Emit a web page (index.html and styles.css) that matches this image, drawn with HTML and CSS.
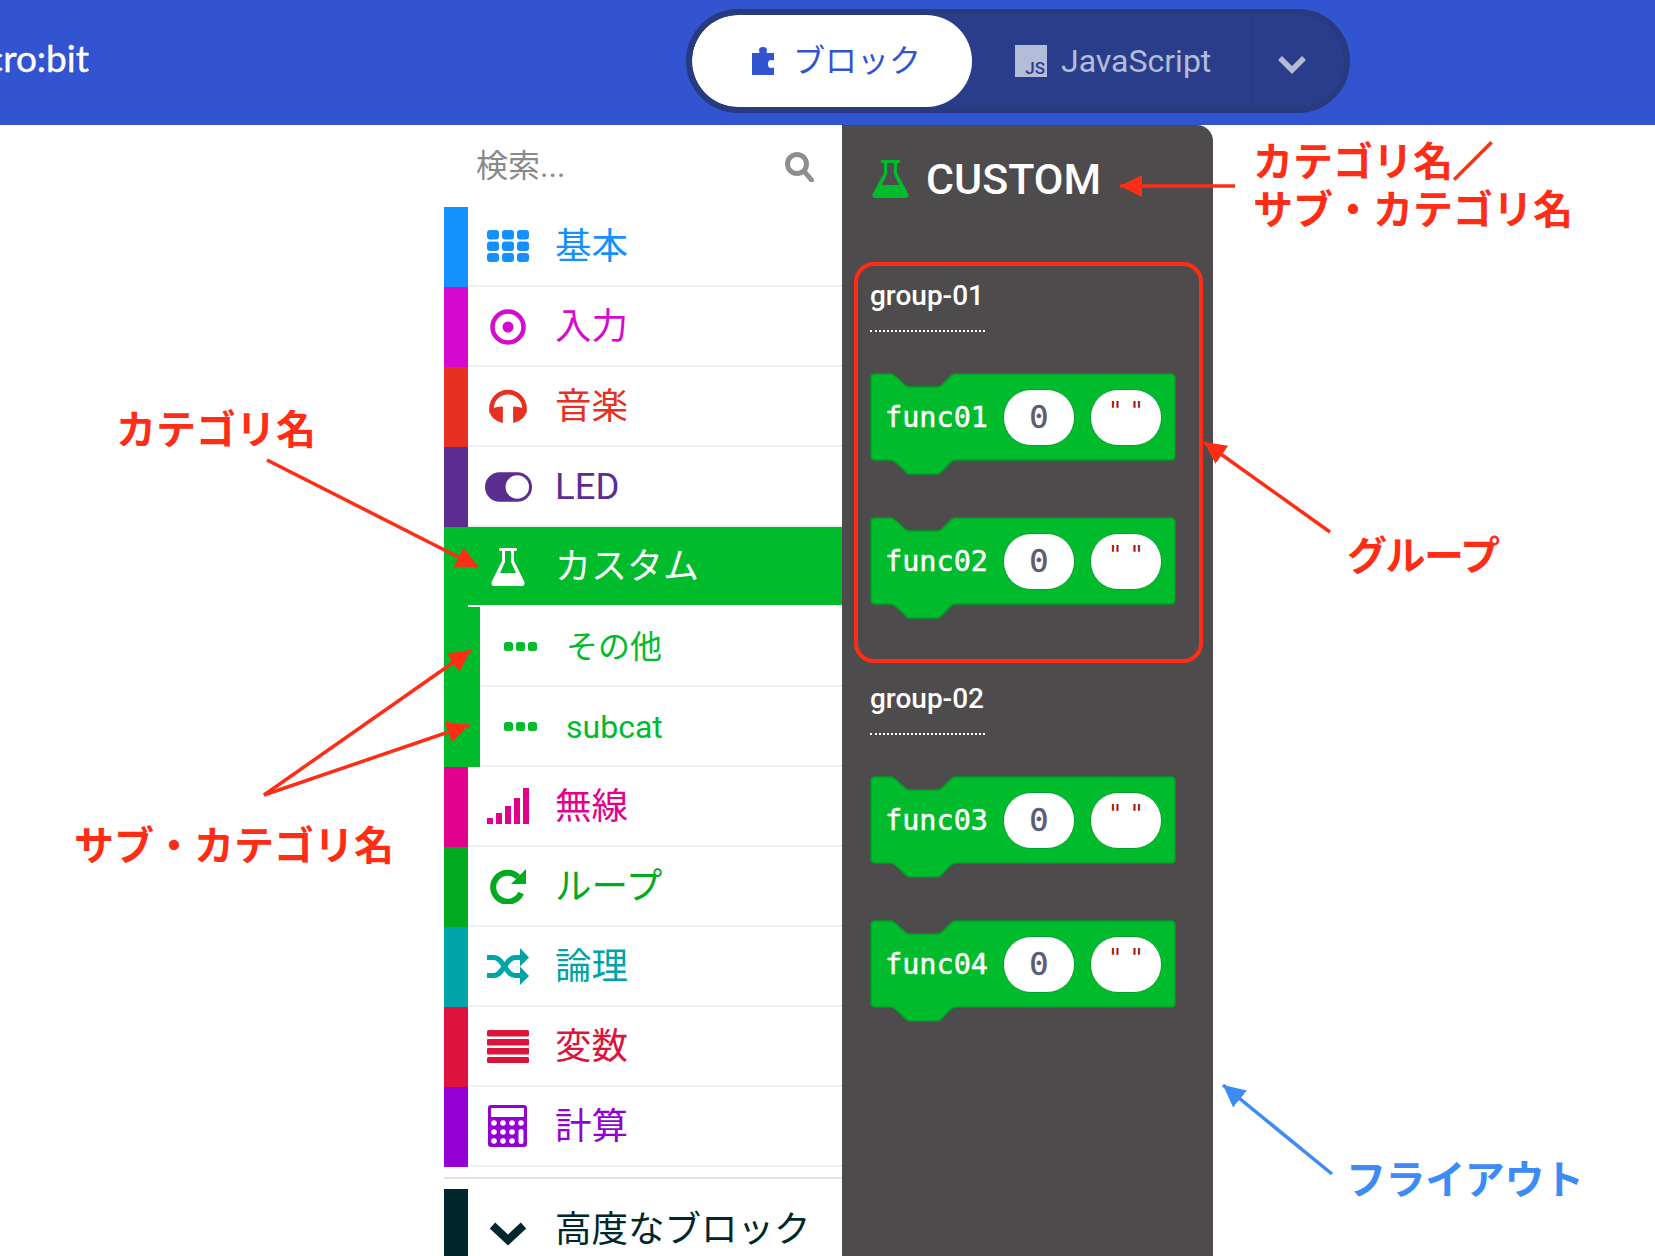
FILE: index.html
```html
<!DOCTYPE html>
<html lang="ja">
<head>
  <meta charset="UTF-8">
  <title>micro:bit ブロック カテゴリ</title>
  <link rel="stylesheet" href="styles.css">
</head>
<body>
  <!-- Header -->
  <div class="header">
    <div class="brand"><span>micro:bit</span></div>
    <div class="toggle">
      <div class="tab tab-active">
        <svg class="icon-puzzle" viewBox="0 0 24 28"><path d="M1 6h7c1-1 0-2 0-3a4 3 0 0 1 8 0c0 1-1 2 0 3h7v7c-1 1-2 0-3 0a3 4 0 0 0 0 8c1 0 2-1 3 0v7H1z"/></svg>
        <span class="ja">ブロック</span>
      </div>
      <div class="tab">
        <div class="icon-js"><span>JS</span></div>
        <span>JavaScript</span>
      </div>
      <div class="tab-more">
        <svg class="icon-more" viewBox="0 0 30 20"><path d="M3 4l12 12L27 4"/></svg>
      </div>
    </div>
  </div>

  <div class="workspace">
    <!-- Toolbox -->
    <div class="toolbox">
      <div class="search">
        <span class="ja">検索...</span>
        <svg class="icon-search" viewBox="0 0 29 30"><circle cx="12" cy="12" r="9.5"/><path d="M19 19l7.500 9"/></svg>
      </div>

      <div class="cat c-basic">
        <div class="cat-strip"></div>
        <div class="cat-body">
          <div class="cat-icon">
            <svg width="42" height="32" viewBox="0 0 42 32">
              <rect x="0" y="0" width="12" height="9.500" rx="3"/><rect x="15" y="0" width="12" height="9.500" rx="3"/><rect x="30" y="0" width="12" height="9.500" rx="3"/>
              <rect x="0" y="11.500" width="12" height="9.500" rx="3"/><rect x="15" y="11.500" width="12" height="9.500" rx="3"/><rect x="30" y="11.500" width="12" height="9.500" rx="3"/>
              <rect x="0" y="23" width="12" height="9" rx="3"/><rect x="15" y="23" width="12" height="9" rx="3"/><rect x="30" y="23" width="12" height="9" rx="3"/>
            </svg>
          </div>
          <span class="ja">基本</span>
        </div>
      </div>

      <div class="cat c-input">
        <div class="cat-strip"></div>
        <div class="cat-body">
          <div class="cat-icon">
            <svg class="nudge" width="36" height="36" viewBox="0 0 36 36"><circle class="ring" cx="18" cy="18" r="15.500" stroke-width="4.500"/><circle cx="18" cy="18" r="5.500"/></svg>
          </div>
          <span class="ja">入力</span>
        </div>
      </div>

      <div class="cat c-music">
        <div class="cat-strip"></div>
        <div class="cat-body">
          <div class="cat-icon">
            <svg width="40" height="34" viewBox="0 0 38 33">
              <path class="ring" stroke-width="4.500" d="M3 23V19a16 16 0 0 1 32 0v4"/>
              <path d="M1 21q1 9 13 12V17Q6 17 1 21z"/><path d="M37 21q-1 9-13 12V17q8 0 13 4z"/>
            </svg>
          </div>
          <span class="ja">音楽</span>
        </div>
      </div>

      <div class="cat c-led">
        <div class="cat-strip"></div>
        <div class="cat-body">
          <div class="cat-icon">
            <svg class="nudge" width="47" height="30" viewBox="0 0 48 30"><rect width="48" height="30" rx="15"/><circle cx="33" cy="15" r="12" fill="#fff"/></svg>
          </div>
          <span class="latin">LED</span>
        </div>
      </div>

      <div class="cat c-custom cat-selected">
        <div class="cat-strip"></div>
        <div class="cat-body">
          <div class="cat-icon">
            <svg class="nudge" width="34" height="38" viewBox="0 0 34 38"><path fill-rule="evenodd" d="M9 0H25q1 0 1 1.500T25 3H23V13L33 33q2 5-3 5H4q-5 0-3-5L11 13V3H9Q8 3 8 1.500T9 0zM14 3V14L9 25H25L20 14V3z"/></svg>
          </div>
          <span class="ja">カスタム</span>
        </div>
      </div>

      <div class="cat cat-sub c-custom">
        <div class="cat-strip"></div>
        <div class="cat-body">
          <div class="cat-icon">
            <svg width="33" height="9" viewBox="0 0 33 9"><rect width="9" height="9" rx="2.500"/><rect x="12" width="9" height="9" rx="2.500"/><rect x="24" width="9" height="9" rx="2.500"/></svg>
          </div>
          <span class="ja">その他</span>
        </div>
      </div>

      <div class="cat cat-sub c-custom">
        <div class="cat-strip"></div>
        <div class="cat-body">
          <div class="cat-icon">
            <svg width="33" height="9" viewBox="0 0 33 9"><rect width="9" height="9" rx="2.500"/><rect x="12" width="9" height="9" rx="2.500"/><rect x="24" width="9" height="9" rx="2.500"/></svg>
          </div>
          <span class="latin">subcat</span>
        </div>
      </div>

      <div class="cat c-radio">
        <div class="cat-strip"></div>
        <div class="cat-body">
          <div class="cat-icon">
            <svg width="42" height="36" viewBox="0 0 42 36"><rect x="0" y="30" width="6" height="6"/><rect x="9" y="25" width="6" height="11"/><rect x="18" y="18" width="6" height="18"/><rect x="27" y="10" width="6" height="26"/><rect x="36" y="0" width="6" height="36"/></svg>
          </div>
          <span class="ja">無線</span>
        </div>
      </div>

      <div class="cat c-loops">
        <div class="cat-strip"></div>
        <div class="cat-body">
          <div class="cat-icon">
            <svg width="36" height="36" viewBox="0 0 36 36"><path class="ring" stroke-width="6" d="M28 9A14.500 14.500 0 1 0 31 25"/><path d="M36 1V16H21z"/></svg>
          </div>
          <span class="ja">ループ</span>
        </div>
      </div>

      <div class="cat c-logic">
        <div class="cat-strip"></div>
        <div class="cat-body">
          <div class="cat-icon">
            <svg width="42" height="37" viewBox="0 0 42 37">
              <path class="ring" stroke-width="5" d="M0 9.500H7C16 9.500 19 27.500 28 27.500H34"/>
              <path class="ring" stroke-width="5" d="M0 27.500H7C16 27.500 19 9.500 28 9.500H34"/>
              <path d="M33 0L42 9.500 33 18.500z"/><path d="M33 18.500L42 28 33 37z"/>
            </svg>
          </div>
          <span class="ja">論理</span>
        </div>
      </div>

      <div class="cat c-vars">
        <div class="cat-strip"></div>
        <div class="cat-body">
          <div class="cat-icon">
            <svg width="42" height="33" viewBox="0 0 42 33"><rect width="42" height="6.500" rx="1.500"/><rect y="9" width="42" height="6.500" rx="1"/><rect y="18" width="42" height="6.500" rx="1"/><rect y="27" width="42" height="6" rx="1.500"/></svg>
          </div>
          <span class="ja">変数</span>
        </div>
      </div>

      <div class="cat c-math">
        <div class="cat-strip"></div>
        <div class="cat-body">
          <div class="cat-icon">
            <svg class="shift-left" width="39" height="42" viewBox="0 0 39 42">
              <rect width="39" height="42" rx="3"/>
              <g fill="#fff">
                <rect x="3" y="3" width="33" height="9" rx="1"/>
                <circle cx="6" cy="18" r="2.800"/><circle cx="15" cy="18" r="2.800"/><circle cx="24" cy="18" r="2.800"/><circle cx="33" cy="18" r="2.800"/>
                <circle cx="6" cy="27" r="2.800"/><circle cx="15" cy="27" r="2.800"/><circle cx="24" cy="27" r="2.800"/>
                <circle cx="6" cy="36" r="2.800"/><circle cx="15" cy="36" r="2.800"/><circle cx="24" cy="36" r="2.800"/>
                <rect x="30.500" y="24" width="5" height="15" rx="2.500"/>
              </g>
            </svg>
          </div>
          <span class="ja">計算</span>
        </div>
      </div>

      <div class="toolbox-sep"></div>

      <div class="cat cat-more c-advanced">
        <div class="cat-strip"></div>
        <div class="cat-body">
          <div class="cat-icon">
            <svg width="38" height="25" viewBox="0 0 38 25"><path class="ring" stroke-width="8" d="M3.500 4.500L19 19 34.500 4.500"/></svg>
          </div>
          <span class="ja">高度なブロック</span>
        </div>
      </div>
    </div>

    <!-- Flyout -->
    <div class="flyout">
      <div class="flyout-head">
        <svg class="icon-flask" width="37" height="38" viewBox="0 0 34 38" preserveAspectRatio="none"><path fill-rule="evenodd" d="M9 0H25q1 0 1 1.500T25 3H23V13L33 33q2 5-3 5H4q-5 0-3-5L11 13V3H9Q8 3 8 1.500T9 0zM14 3V14L9 25H25L20 14V3z"/></svg>
        <span>CUSTOM</span>
      </div>

      <div class="group group-marked">
        <div class="group-label">group-01</div>
        <div class="block">
          <svg class="block-shape" viewBox="0 0 306 102"><path d="M1 5Q1 1 5 1H20Q23 1 25 3L35 12Q37 14 40 14H67Q70 14 72 12L81 3Q83 1 86 1H301Q305 1 305 5V83Q305 87 301 87H86Q83 87 81 89L72 98Q70 101 67 101H40Q37 101 35 98L25 89Q23 87 20 87H5Q1 87 1 83z"/></svg>
          <div class="block-row">
            <span class="block-name">func01</span>
            <span class="pill pill-num">0</span>
            <span class="pill pill-str"><i>"</i><i>"</i></span>
          </div>
        </div>
        <div class="block">
          <svg class="block-shape" viewBox="0 0 306 102"><path d="M1 5Q1 1 5 1H20Q23 1 25 3L35 12Q37 14 40 14H67Q70 14 72 12L81 3Q83 1 86 1H301Q305 1 305 5V83Q305 87 301 87H86Q83 87 81 89L72 98Q70 101 67 101H40Q37 101 35 98L25 89Q23 87 20 87H5Q1 87 1 83z"/></svg>
          <div class="block-row">
            <span class="block-name">func02</span>
            <span class="pill pill-num">0</span>
            <span class="pill pill-str"><i>"</i><i>"</i></span>
          </div>
        </div>
      </div>

      <div class="group">
        <div class="group-label">group-02</div>
        <div class="block">
          <svg class="block-shape" viewBox="0 0 306 102"><path d="M1 5Q1 1 5 1H20Q23 1 25 3L35 12Q37 14 40 14H67Q70 14 72 12L81 3Q83 1 86 1H301Q305 1 305 5V83Q305 87 301 87H86Q83 87 81 89L72 98Q70 101 67 101H40Q37 101 35 98L25 89Q23 87 20 87H5Q1 87 1 83z"/></svg>
          <div class="block-row">
            <span class="block-name">func03</span>
            <span class="pill pill-num">0</span>
            <span class="pill pill-str"><i>"</i><i>"</i></span>
          </div>
        </div>
        <div class="block">
          <svg class="block-shape" viewBox="0 0 306 102"><path d="M1 5Q1 1 5 1H20Q23 1 25 3L35 12Q37 14 40 14H67Q70 14 72 12L81 3Q83 1 86 1H301Q305 1 305 5V83Q305 87 301 87H86Q83 87 81 89L72 98Q70 101 67 101H40Q37 101 35 98L25 89Q23 87 20 87H5Q1 87 1 83z"/></svg>
          <div class="block-row">
            <span class="block-name">func04</span>
            <span class="pill pill-num">0</span>
            <span class="pill pill-str"><i>"</i><i>"</i></span>
          </div>
        </div>
      </div>
    </div>
  </div>

  <!-- Annotations over the screenshot -->
  <svg class="arrows" width="1655" height="1256" viewBox="0 0 1655 1256">
    <defs>
      <marker id="headRed" markerUnits="userSpaceOnUse" markerWidth="24" markerHeight="24" refX="22" refY="11" orient="auto"><path d="M0 0L22 11 0 22z" fill="#ff2d16"/></marker>
      <marker id="headBlue" markerUnits="userSpaceOnUse" markerWidth="24" markerHeight="24" refX="22" refY="11" orient="auto"><path d="M0 0L22 11 0 22z" fill="#3d8bf5"/></marker>
    </defs>
    <g stroke="#ff2d16" stroke-width="3.500" fill="none">
      <line x1="267" y1="460" x2="478" y2="567" marker-end="url(#headRed)"/>
      <line x1="264" y1="795" x2="471" y2="650" marker-end="url(#headRed)"/>
      <line x1="264" y1="795" x2="469" y2="725" marker-end="url(#headRed)"/>
      <line x1="1235" y1="186" x2="1120" y2="186" marker-end="url(#headRed)"/>
      <line x1="1330" y1="532" x2="1204" y2="442" marker-end="url(#headRed)"/>
    </g>
    <line x1="1332" y1="1174" x2="1223" y2="1085" stroke="#3d8bf5" stroke-width="3.500" marker-end="url(#headBlue)"/>
  </svg>
  <div class="note note-cat">カテゴリ名</div>
  <div class="note note-sub">サブ・カテゴリ名</div>
  <div class="note note-head">カテゴリ名<span class="note-slash">／</span><br>サブ・カテゴリ名</div>
  <div class="note note-group">グループ</div>
  <div class="note note-flyout">フライアウト</div>
</body>
</html>
```

FILE: styles.css
```css
/* Reset & Body */
html, body {
  margin: 0;
  padding: 0;
  height: 1256px;
  overflow: hidden;
  background: #fff;
}

body {
  position: relative;
  font-family: Roboto, "Noto Sans CJK JP", sans-serif;
}

/* Japanese text sits low in the line, lift it a little */
.ja {
  padding-bottom: 6px;
}

/* Header */
.header {
  display: flex;
  align-items: center;
  height: 125px;
  background: #3354d1;
  position: relative;
}

.brand {
  width: 89px;
  display: flex;
  justify-content: flex-end;
  overflow: hidden;
  color: #fff;
  font-family: Lato, sans-serif;
  font-size: 37px;
  white-space: nowrap;
  margin-top: -10px;
  -webkit-text-stroke: 0.4px #fff;
}

.toggle {
  display: flex;
  align-items: stretch;
  box-sizing: border-box;
  width: 664px;
  height: 104px;
  margin-left: 597px;
  margin-top: -3px;
  border: 6px solid #283a80;
  border-radius: 52px;
  background: #2a3d8b;
  overflow: hidden;
}

.tab {
  display: flex;
  align-items: center;
  font-size: 32px;
  color: #b4bcd8;
}

.tab-active {
  width: 280px;
  box-sizing: border-box;
  padding-left: 59px;
  gap: 18px;
  background: #fff;
  color: #3354d1;
  border-radius: 46px;
}

.tab:nth-child(2) {
  width: 279px;
  padding-left: 43px;
  box-sizing: border-box;
  gap: 14px;
}

.tab-more {
  flex: 1;
  display: flex;
  align-items: center;
  justify-content: center;
  border-left: 1px solid #283a80;
}

.icon-puzzle {
  width: 24px;
  height: 28px;
  fill: #3354d1;
}

.icon-js {
  width: 32px;
  height: 32px;
  display: flex;
  align-items: flex-end;
  justify-content: flex-end;
  background: #b4bcd8;
  color: #2a3d8b;
  font-size: 17px;
  font-weight: 500;
  line-height: 17px;
  padding-right: 2px;
  box-sizing: border-box;
}

.icon-more {
  width: 30px;
  height: 20px;
  margin: 6px 12px 0 0;
  fill: none;
  stroke: #b4bcd8;
  stroke-width: 5.5;
}

/* Workspace */
.workspace {
  display: flex;
  margin-left: 444px;
  height: 1131px;
}

.toolbox {
  width: 398px;
}

.search {
  height: 82px;
  display: flex;
  align-items: center;
  justify-content: space-between;
  padding: 0 28px 0 32px;
  color: #8a8a8a;
  font-size: 32px;
}

.icon-search {
  width: 29px;
  height: 30px;
  fill: none;
  stroke: #8e8e8e;
  stroke-width: 5;
  stroke-linecap: round;
  margin-top: 2px;
}

/* Categories */
.cat {
  display: flex;
  height: 80px;
  font-size: 36.5px;
  color: var(--cat);
}

.cat-strip {
  width: 24px;
  background: var(--cat);
}

.cat-body {
  flex: 1;
  display: flex;
  align-items: center;
  box-sizing: border-box;
  border-bottom: 2px solid #ecf0f1;
}

.cat-icon {
  width: 48px;
  margin: 0 23px 0 16px;
  display: flex;
  justify-content: center;
}

.cat-icon svg {
  fill: var(--cat);
}

.cat-icon .ring {
  fill: none;
  stroke: var(--cat);
}

.cat-icon .nudge {
  margin-top: 2px;
}

.cat-icon .shift-left {
  margin-left: -2px;
}

.latin {
  padding-top: 1px;
}

.cat-selected {
  color: #fff;
  font-size: 36px;
}

.cat-selected .cat-body {
  background: var(--cat);
  border-bottom-color: #fff;
}

.cat-selected .cat-icon svg {
  fill: #fff;
}

.cat-sub {
  font-size: 32px;
}

.cat-sub .cat-strip {
  width: 36px;
}

.cat-sub .cat-icon {
  width: 33px;
  margin: 0 29px 0 24px;
}

.cat-sub .ja {
  padding-bottom: 4px;
}

.toolbox-sep {
  height: 2px;
  margin: 10px 0;
  background: #e0e3e4;
}

.cat-more .cat-body {
  border-bottom: none;
}

.cat-more .cat-icon svg {
  margin-top: 8px;
}

.c-basic { --cat: #1490ff; }
.c-input { --cat: #d40ad0; }
.c-music { --cat: #e63022; }
.c-led { --cat: #5c2d91; }
.c-custom { --cat: #00bb2b; }
.c-radio { --cat: #e3008c; }
.c-loops { --cat: #00aa1e; }
.c-logic { --cat: #00a4a6; }
.c-vars { --cat: #dc143c; }
.c-math { --cat: #9400d3; }
.c-advanced { --cat: #00272b; }

/* Flyout */
.flyout {
  width: 371px;
  box-sizing: border-box;
  padding: 0 10px 0 12px;
  background: #4d4b4c;
  border-top-right-radius: 16px;
}

.flyout-head {
  height: 137px;
  box-sizing: border-box;
  padding: 33px 0 0 18px;
  display: flex;
  align-items: flex-start;
  gap: 17px;
  color: #fff;
  font-size: 43px;
  font-weight: 500;
  line-height: 42px;
}

.icon-flask {
  fill: #00bb2b;
  margin-top: 2px;
}

.group {
  box-sizing: border-box;
  border: 4px solid transparent;
  border-radius: 20px;
  padding: 14px 12px 40px;
  margin-bottom: 2px;
  width: 349px;
}

.group-marked {
  border-color: #ff2d16;
}

.group-label {
  width: 115px;
  box-sizing: border-box;
  height: 52px;
  padding-bottom: 19px;
  border-bottom: 2px dotted #fff;
  margin-bottom: 41px;
  color: #fff;
  font-size: 28px;
  font-weight: 500;
  line-height: 32px;
  white-space: nowrap;
}

.block {
  position: relative;
  width: 306px;
  height: 102px;
  margin-bottom: 42px;
}

.block:last-child {
  margin-bottom: 0;
}

.block-shape {
  position: absolute;
  top: 0;
  left: 0;
  width: 306px;
  height: 102px;
  fill: #00bb2b;
  stroke: #00a026;
  stroke-width: 1.5;
}

.block-row {
  position: relative;
  height: 88px;
  display: flex;
  align-items: center;
  padding-left: 15px;
  box-sizing: border-box;
  gap: 15px;
  font-family: "DejaVu Sans Mono", monospace;
  font-size: 28.5px;
}

.block-name {
  color: #fff;
  -webkit-text-stroke: 0.5px #fff;
}

.pill {
  box-sizing: border-box;
  width: 72px;
  height: 57px;
  background: #fff;
  border: 1px solid #00a026;
  border-radius: 28px;
  display: flex;
  justify-content: center;
}

.pill-num {
  align-items: center;
  color: #575e75;
  font-size: 32px;
  -webkit-text-stroke: 0.5px #575e75;
}

.pill-str {
  gap: 7px;
  color: #a31515;
  font-size: 24px;
  line-height: 26px;
  padding-top: 8px;
}

.pill-str i {
  font-style: normal;
}

/* Annotations */
.arrows {
  position: absolute;
  top: 0;
  left: 0;
  pointer-events: none;
}

.note {
  position: absolute;
  color: #ff2d16;
  font-family: "Noto Sans CJK JP", sans-serif;
  font-size: 40px;
  font-weight: 700;
  line-height: 48px;
  white-space: nowrap;
}

.note-slash {
  -webkit-text-stroke: 1.5px #ff2d16;
}

.note-cat { left: 116px; top: 403px; }
.note-sub { left: 74px; top: 819px; }
.note-head { left: 1253px; top: 135px; }
.note-group { left: 1347px; top: 529px; letter-spacing: -1.5px; }
.note-flyout { left: 1346px; top: 1153px; color: #3d8bf5; letter-spacing: -0.4px; }
```
